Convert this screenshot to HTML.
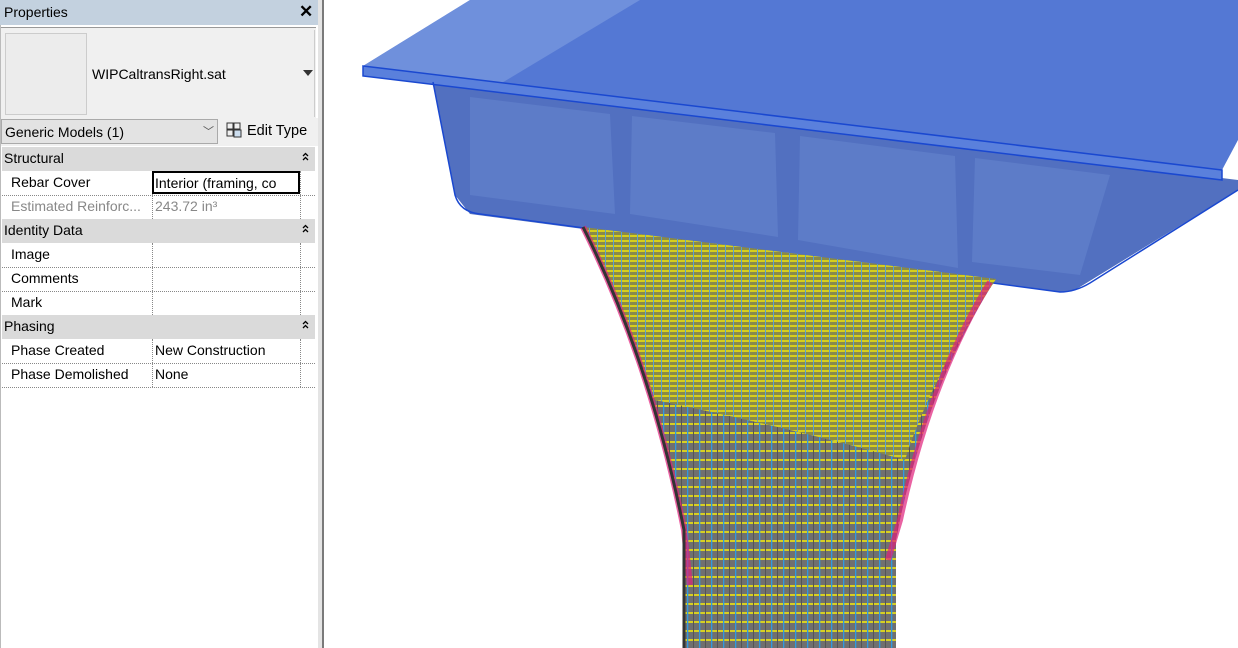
<!DOCTYPE html>
<html><head><style>
body{margin:0;width:1238px;height:648px;overflow:hidden;background:#fff;font-family:"Liberation Sans",sans-serif;font-size:14px;color:#000;position:relative}
.p{position:absolute;left:0;top:0;width:318px;height:648px;background:#fff}
.abs{position:absolute}
.row{position:absolute;left:2px;width:313px;height:24px;border-bottom:1px dotted #888}
.row .k{position:absolute;left:9px;top:3px}
.row .v{position:absolute;left:153px;top:3px}
.row .d1{position:absolute;left:150px;top:0;height:24px;border-left:1px dotted #888}
.row .d2{position:absolute;left:298px;top:0;height:24px;border-left:1px dotted #888}
.sec{position:absolute;left:2px;width:313px;height:24px;background:#dadada}
.sec span{position:absolute;left:2px;top:3px}
.sec svg{position:absolute;right:6px;top:5px}
</style></head><body>
<div class="p">
 <div class="abs" style="left:0;top:0;width:318px;height:25px;background:#c3d1df"></div>
 <div class="abs" style="left:4px;top:4px;font-size:14px">Properties</div>
 <div class="abs" style="left:299px;top:2px;font-size:17px;font-weight:bold">✕</div>
 <div class="abs" style="left:0;top:27px;width:316px;height:92px;background:#f0f0f0;border-top:1px solid #999"></div>
 <div class="abs" style="left:5px;top:33px;width:80px;height:80px;background:#ececec;border:1px solid #ccc"></div>
 <div class="abs" style="left:92px;top:66px">WIPCaltransRight.sat</div>
 <div class="abs" style="left:303px;top:70px;width:0;height:0;border-left:5px solid transparent;border-right:5px solid transparent;border-top:6px solid #333"></div>
 <div class="abs" style="left:314px;top:30px;width:1px;height:87px;background:#ccc"></div>
 <div class="abs" style="left:0;top:118px;width:318px;height:28px;background:#f0f0f0"></div>
 <div class="abs" style="left:1px;top:119px;width:217px;height:25px;background:#e3e3e3;border:1px solid #aaa;box-sizing:border-box"></div>
 <div class="abs" style="left:5px;top:124px">Generic Models (1)</div>
 <div class="abs" style="left:203px;top:123px;font-size:11px;color:#555">﹀</div>
 <svg class="abs" style="left:226px;top:122px" width="16" height="16"><rect x="1" y="1" width="6" height="6" fill="none" stroke="#333"/><rect x="8" y="1" width="6" height="6" fill="none" stroke="#333"/><rect x="1" y="8" width="6" height="6" fill="none" stroke="#333"/><rect x="8" y="8" width="7" height="7" fill="#cde" stroke="#333"/></svg>
 <div class="abs" style="left:247px;top:123px;font-size:14.5px">Edit Type</div>
 <div class="sec" style="top:147px"><span>Structural</span><svg width="7" height="9"><path d="M1,4 L3.5,1.5 L6,4 M1,8 L3.5,5.5 L6,8" fill="none" stroke="#000" stroke-width="1.3"/></svg></div>
 <div class="row" style="top:171px"><span class="k">Rebar Cover</span><div class="d1"></div><div class="d2"></div></div>
 <div class="abs" style="left:152px;top:171px;width:148px;height:23px;border:2px solid #000;box-sizing:border-box;background:#fff;overflow:hidden"><span style="position:absolute;left:1px;top:2px;white-space:nowrap">Interior (framing, co</span></div>
 <div class="row" style="top:195px;color:#888"><span class="k">Estimated Reinforc...</span><span class="v">243.72 in³</span><div class="d1"></div><div class="d2"></div></div>
 <div class="sec" style="top:219px"><span>Identity Data</span><svg width="7" height="9"><path d="M1,4 L3.5,1.5 L6,4 M1,8 L3.5,5.5 L6,8" fill="none" stroke="#000" stroke-width="1.3"/></svg></div>
 <div class="row" style="top:243px"><span class="k">Image</span><div class="d1"></div><div class="d2"></div></div>
 <div class="row" style="top:267px"><span class="k">Comments</span><div class="d1"></div><div class="d2"></div></div>
 <div class="row" style="top:291px"><span class="k">Mark</span><div class="d1"></div><div class="d2"></div></div>
 <div class="sec" style="top:315px"><span>Phasing</span><svg width="7" height="9"><path d="M1,4 L3.5,1.5 L6,4 M1,8 L3.5,5.5 L6,8" fill="none" stroke="#000" stroke-width="1.3"/></svg></div>
 <div class="row" style="top:339px"><span class="k">Phase Created</span><span class="v">New Construction</span><div class="d1"></div><div class="d2"></div></div>
 <div class="row" style="top:363px"><span class="k">Phase Demolished</span><span class="v">None</span><div class="d1"></div><div class="d2"></div></div>
 <div class="abs" style="left:0;top:25px;width:1px;height:623px;background:#bbb"></div>
</div>
<div class="abs" style="left:318px;top:0;width:4px;height:648px;background:#e4e4e4"></div>
<div class="abs" style="left:322px;top:0;width:2px;height:648px;background:#7a7a7a"></div>
<svg class="abs" style="left:0;top:0" width="1238" height="648">
 <defs>
  <pattern id="ys" width="12" height="9" patternUnits="userSpaceOnUse"><rect width="12" height="9" fill="#707070"/><rect y="0" width="12" height="2" fill="#d8d020"/><rect x="3" width="1.3" height="9" fill="#2f9ae0"/><rect x="9" width="1" height="9" fill="#555"/></pattern>
  <pattern id="yf" width="8" height="5" patternUnits="userSpaceOnUse"><rect width="8" height="5" fill="#8a8a48"/><rect width="8" height="2" fill="#d6ce1c"/><rect x="5" width="1" height="5" fill="#5aa0d0"/></pattern>
 </defs>
 <polygon points="363,66 470,0 1238,0 1238,140 1222,170" fill="#5478d4"/>
 <polygon points="363,66 470,0 640,0 500,84" fill="#7b9ae0" opacity=".7"/>
 <polygon points="433,82 1238,180 1238,190 1075,290 1060,292 470,214 455,195" fill="#5270c0"/>
 <polygon points="470,97 610,114 615,214 470,195" fill="#5d7cc8"/>
 <polygon points="632,116 775,133 778,237 630,214" fill="#5d7cc8"/>
 <polygon points="800,136 955,156 958,268 798,240" fill="#5d7cc8"/>
 <polygon points="975,158 1110,175 1080,275 972,262" fill="#5d7cc8"/>
 <polygon points="363,66 1222,170 1222,180 363,76" fill="#5a80dc" stroke="#1a48d0" stroke-width="1.5"/>
 <path d="M433,82 L455,195 Q460,212 480,214 L1060,292 Q1075,292 1090,283 L1238,190" fill="none" stroke="#1a48d0" stroke-width="1.5"/>
 <path d="M583,227 L996,279 Q930,380 900,520 L896,540 L896,648 L684,648 L684,530 Q650,360 583,227Z" fill="url(#ys)"/>
 <path d="M583,227 L996,279 Q930,380 905,460 Q800,430 655,400 Q620,300 583,227Z" fill="url(#yf)"/>
 <path d="M583,227 Q650,360 684,530 L690,585" fill="none" stroke="#e0207a" stroke-width="6" opacity=".7"/>
 <path d="M990,282 Q930,380 900,520 L888,560" fill="none" stroke="#e0207a" stroke-width="6" opacity=".7"/>
 <path d="M583,227 Q650,360 684,530 L684,648" fill="none" stroke="#333" stroke-width="3"/>
</svg>
</body></html>
